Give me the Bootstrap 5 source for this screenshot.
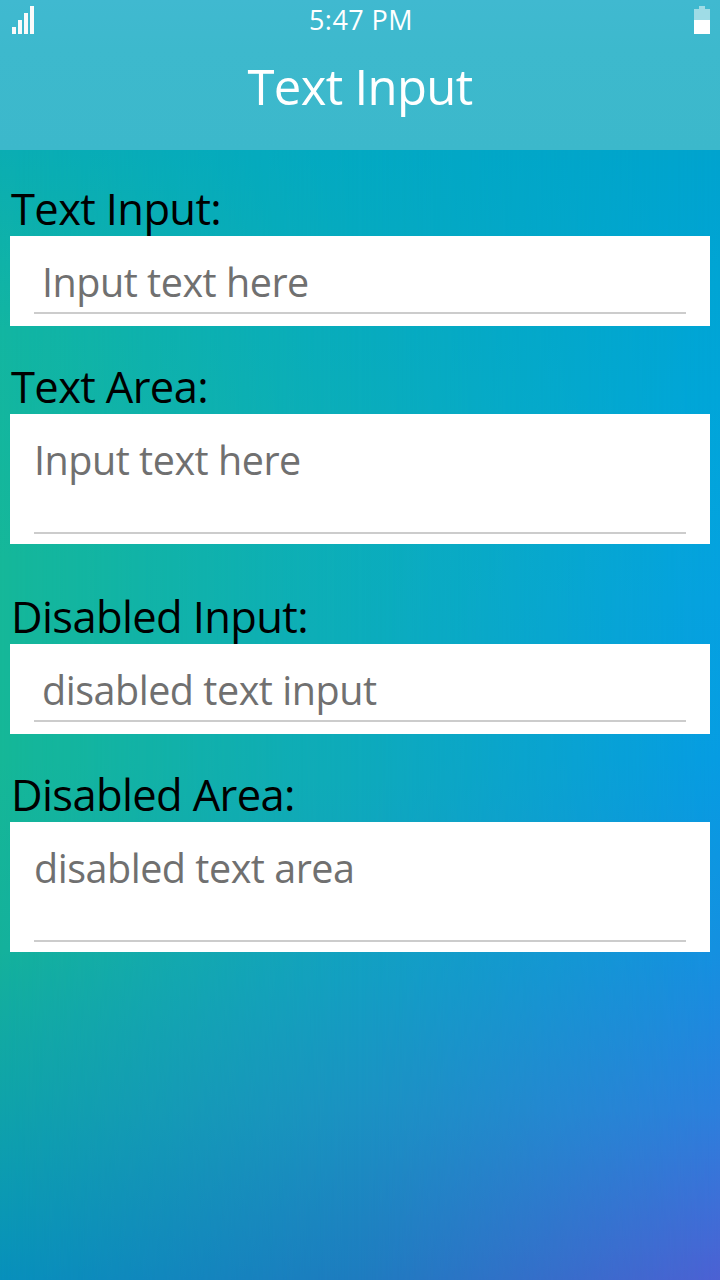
<!DOCTYPE html>
<html lang="en">
<head>
<meta charset="utf-8">
<meta name="viewport" content="width=device-width, initial-scale=1">
<title>Text Input</title>
<link href="https://cdn.jsdelivr.net/npm/bootstrap@5.3.0/dist/css/bootstrap.min.css" rel="stylesheet">
<style>
body{font-family:"Open Sans","Noto Sans",sans-serif;color:#000;height:1280px;isolation:isolate;
 background:linear-gradient(#02a8c4 0,#03a9c3 150px,#0baebb 450px,#0cadbc 650px,#0eaabc 780px,#139fc3 980px,#1b92c3 1110px,#1e7cc0 1280px)}
/* left and right colour washes that fade toward the centre */
body::before,body::after{content:"";position:absolute;inset:0;z-index:-1}
body::before{background:linear-gradient(#08acb5 0,#0aadb2 150px,#12b5a1 330px,#15b799 560px,#15b797 760px,#14b19b 950px,#0fa3a9 1100px,#0790bb 1280px);
 -webkit-mask-image:linear-gradient(90deg,#000,transparent 50%);mask-image:linear-gradient(90deg,#000,transparent 50%)}
body::after{background:linear-gradient(#00a2cc 0,#00a3ce 150px,#00a5d9 400px,#05a1e0 600px,#069ce2 760px,#1490e0 950px,#2c7fdc 1110px,#4c61d3 1280px);
 -webkit-mask-image:linear-gradient(270deg,#000,transparent 50%);mask-image:linear-gradient(270deg,#000,transparent 50%)}
.topbar{height:150px;background:linear-gradient(#40b9d0,#3db9cd 50px,#3cb8cb)}
.status{height:40px;padding:0 10px 0 12px}
.side{flex:1 1 0}
.clock{font-size:27px;line-height:40px;letter-spacing:.45px}
.title{font-size:49px;line-height:66px;letter-spacing:-.65px;margin-top:13px;font-weight:450}
.fields{padding:31px 10px 0}
.cap{font-size:43.5px;line-height:55px;height:55px;letter-spacing:-.63px;padding-left:1px;display:block}
.box{background:#fff;padding:12px 24px;margin-bottom:33px}
.box.tall{padding-bottom:10px;margin-bottom:45px}
.box .form-control{font-size:39.5px;line-height:64px;letter-spacing:-.48px;height:66px;padding:3px 8px 0;color:#707070;background:transparent;border:0;border-bottom:2px solid #ccc;border-radius:0;opacity:1;resize:none;overflow:hidden;min-height:0}
.box .form-control::placeholder{color:#707070;opacity:1}
.box textarea.form-control{height:108px;padding:2px 0 0;display:block}
</style>
</head>
<body class="overflow-hidden position-relative">
<header class="topbar text-white text-center">
 <div class="status d-flex align-items-start">
  <div class="side d-flex"><svg class="mt-1" width="22" height="30" viewBox="0 4 22 30" fill="#fafafa" shape-rendering="crispEdges"><path d="M0 27h4v7H0zM6 20h4v14H6zM12 13h4v21h-4zM18 6h4v28h-4z"/></svg></div>
  <span class="clock">5:47 PM</span>
  <div class="side d-flex justify-content-end"><svg class="mt-1" width="16" height="30" viewBox="0 4 16 30" fill="#fff" shape-rendering="crispEdges"><path fill="#9fdce6" d="M5 6h6v3h5v11H0V9h5z"/><path d="M0 20h16v14H0z"/></svg></div>
 </div>
 <h1 class="title mb-0">Text Input</h1>
</header>
<main class="fields">
 <label class="cap" for="a">Text Input:</label>
 <div class="box"><input class="form-control" id="a" placeholder="Input text here"></div>
 <label class="cap" for="b">Text Area:</label>
 <div class="box tall"><textarea class="form-control" id="b" placeholder="Input text here"></textarea></div>
 <label class="cap" for="c">Disabled Input:</label>
 <div class="box"><input class="form-control" id="c" placeholder="disabled text input" disabled></div>
 <label class="cap" for="d">Disabled Area:</label>
 <div class="box tall"><textarea class="form-control" id="d" placeholder="disabled text area" disabled></textarea></div>
</main>
<script src="https://cdn.jsdelivr.net/npm/bootstrap@5.3.0/dist/js/bootstrap.bundle.min.js"></script>
</body>
</html>
